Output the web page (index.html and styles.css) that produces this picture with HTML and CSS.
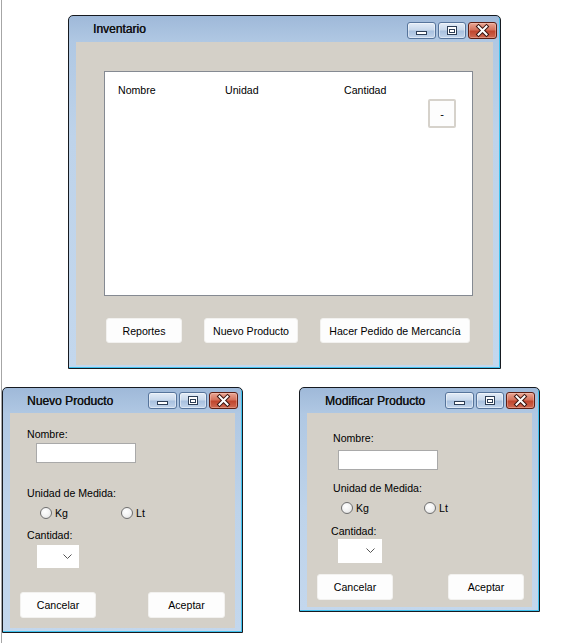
FILE: index.html
```html
<!DOCTYPE html>
<html lang="es">
<head>
<meta charset="utf-8">
<title>Inventario</title>
<link rel="stylesheet" href="styles.css">
</head>
<body>
<div class="desktop">

  <section class="window win-main">
    <header class="titlebar">
      <span class="title">Inventario</span>
      <div class="caption-btns">
        <span class="cbtn cbtn-min"><svg width="29" height="17" viewBox="0 0 29 17"><rect x="9.5" y="9.5" width="10" height="3" fill="#fff" stroke="#2d3e56"/></svg></span>
        <span class="cbtn cbtn-max"><svg width="28" height="17" viewBox="0 0 28 17"><rect x="9.5" y="4.5" width="9" height="8" fill="#fff" stroke="#2d3e56"/><rect x="11.5" y="7.5" width="5" height="3" fill="none" stroke="#2d3e56"/></svg></span>
        <span class="cbtn cbtn-close"><svg width="29" height="17" viewBox="0 0 29 17"><path d="M10.5 4.5 L18.5 12.5 M18.5 4.5 L10.5 12.5" stroke="#3a1510" stroke-width="4" stroke-linecap="square"/><path d="M10.5 4.5 L18.5 12.5 M18.5 4.5 L10.5 12.5" stroke="#fff" stroke-width="2" stroke-linecap="square"/></svg></span>
      </div>
    </header>
    <div class="client main-client">
      <div class="listbox">
        <div class="list-head">
          <span>Nombre</span>
          <span>Unidad</span>
          <span>Cantidad</span>
        </div>
        <div class="list-tools">
          <button class="btn-minus">-</button>
        </div>
      </div>
      <div class="main-actions">
        <button class="btn btn-rep">Reportes</button>
        <button class="btn btn-nuevo">Nuevo Producto</button>
        <button class="btn btn-pedido">Hacer Pedido de Mercancía</button>
      </div>
    </div>
  </section>

  <section class="window dialog win-nuevo">
    <header class="titlebar">
      <span class="title">Nuevo Producto</span>
      <div class="caption-btns">
        <span class="cbtn cbtn-min"><svg width="29" height="17" viewBox="0 0 29 17"><rect x="9.5" y="9.5" width="10" height="3" fill="#fff" stroke="#2d3e56"/></svg></span>
        <span class="cbtn cbtn-max"><svg width="28" height="17" viewBox="0 0 28 17"><rect x="9.5" y="4.5" width="9" height="8" fill="#fff" stroke="#2d3e56"/><rect x="11.5" y="7.5" width="5" height="3" fill="none" stroke="#2d3e56"/></svg></span>
        <span class="cbtn cbtn-close"><svg width="29" height="17" viewBox="0 0 29 17"><path d="M10.5 4.5 L18.5 12.5 M18.5 4.5 L10.5 12.5" stroke="#3a1510" stroke-width="4" stroke-linecap="square"/><path d="M10.5 4.5 L18.5 12.5 M18.5 4.5 L10.5 12.5" stroke="#fff" stroke-width="2" stroke-linecap="square"/></svg></span>
      </div>
    </header>
    <div class="client form">
      <label class="lbl lbl-nombre">Nombre:</label>
      <div class="input"></div>
      <label class="lbl lbl-unidad">Unidad de Medida:</label>
      <div class="radios">
        <span class="radio radio-kg"><span class="dot"></span>Kg</span>
        <span class="radio"><span class="dot"></span>Lt</span>
      </div>
      <label class="lbl lbl-cant">Cantidad:</label>
      <div class="combo"><svg width="9" height="6" viewBox="0 0 9 6"><path d="M0.5 0.5 L4.5 4.5 L8.5 0.5" fill="none" stroke="#555" stroke-width="1"/></svg></div>
      <div class="actions">
        <button class="btn btn-dlg">Cancelar</button>
        <button class="btn btn-dlg btn-ok">Aceptar</button>
      </div>
    </div>
  </section>

  <section class="window dialog win-mod">
    <header class="titlebar">
      <span class="title">Modificar Producto</span>
      <div class="caption-btns">
        <span class="cbtn cbtn-min"><svg width="29" height="17" viewBox="0 0 29 17"><rect x="9.5" y="9.5" width="10" height="3" fill="#fff" stroke="#2d3e56"/></svg></span>
        <span class="cbtn cbtn-max"><svg width="28" height="17" viewBox="0 0 28 17"><rect x="9.5" y="4.5" width="9" height="8" fill="#fff" stroke="#2d3e56"/><rect x="11.5" y="7.5" width="5" height="3" fill="none" stroke="#2d3e56"/></svg></span>
        <span class="cbtn cbtn-close"><svg width="29" height="17" viewBox="0 0 29 17"><path d="M10.5 4.5 L18.5 12.5 M18.5 4.5 L10.5 12.5" stroke="#3a1510" stroke-width="4" stroke-linecap="square"/><path d="M10.5 4.5 L18.5 12.5 M18.5 4.5 L10.5 12.5" stroke="#fff" stroke-width="2" stroke-linecap="square"/></svg></span>
      </div>
    </header>
    <div class="client form">
      <label class="lbl lbl-nombre">Nombre:</label>
      <div class="input"></div>
      <label class="lbl lbl-unidad">Unidad de Medida:</label>
      <div class="radios">
        <span class="radio radio-kg"><span class="dot"></span>Kg</span>
        <span class="radio"><span class="dot"></span>Lt</span>
      </div>
      <label class="lbl lbl-cant">Cantidad:</label>
      <div class="combo"><svg width="9" height="6" viewBox="0 0 9 6"><path d="M0.5 0.5 L4.5 4.5 L8.5 0.5" fill="none" stroke="#555" stroke-width="1"/></svg></div>
      <div class="actions">
        <button class="btn btn-dlg">Cancelar</button>
        <button class="btn btn-dlg btn-ok">Aceptar</button>
      </div>
    </div>
  </section>

</div>
</body>
</html>
```

FILE: styles.css
```css
html, body {
  margin: 0;
  padding: 0;
  background: #ffffff;
}

body {
  font-family: "Liberation Sans", Arial, sans-serif;
  font-size: 10.6px;
  color: #000;
}

.desktop {
  position: relative;
  width: 564px;
  height: 643px;
  margin-left: 1px;
  border-left: 1px solid #a6a6a6;
  box-sizing: border-box;
  overflow: hidden;
}

/* ---------- window chrome ---------- */
.window {
  position: absolute;
  box-sizing: border-box;
  display: flex;
  flex-direction: column;
  border: 1px solid #161a20;
  border-radius: 5px 5px 0 0;
  padding: 0 7px 3px 7px;
  background: linear-gradient(180deg, #9fb9d9 0px, #b0c8e3 26px, #bed3ea 120px, #c3d7ed 100%);
  box-shadow: inset -1px -1px 0 #3fc2ee;
}

.win-main {
  left: 66px;
  top: 15px;
  width: 433px;
  height: 354px;
}

.dialog {
  width: 241px;
  padding-bottom: 4px;
}

.win-nuevo {
  left: 0px;
  top: 387px;
  height: 246px;
}

.win-mod {
  left: 297px;
  top: 387px;
  height: 225px;
}

.titlebar {
  display: flex;
  align-items: flex-start;
  justify-content: space-between;
  height: 26px;
  flex: none;
}

.dialog .titlebar {
  height: 25px;
}

.title {
  font-size: 12px;
  line-height: 14px;
  color: #111;
  margin-top: 6px;
  margin-left: 17px;
  text-shadow: 0.35px 0 0 #111;
}

.win-mod .title {
  margin-left: 18px;
}

.caption-btns {
  display: flex;
  gap: 2px;
  margin-top: 6px;
  margin-right: -4px;
}

.dialog .caption-btns {
  margin-top: 4px;
  margin-right: -3px;
}

.cbtn {
  display: block;
  height: 17px;
  box-sizing: border-box;
  border: 1px solid #56749b;
  border-radius: 3px;
  background: linear-gradient(180deg, #e3ecf7 0%, #c9d9ec 45%, #a9c1df 55%, #c2d5ec 100%);
  box-shadow: inset 0 0 0 1px rgba(255, 255, 255, 0.45);
  overflow: hidden;
}

.cbtn svg {
  display: block;
  margin: -1px;
}

.cbtn-min { width: 29px; }
.cbtn-max { width: 28px; }

.cbtn-close {
  width: 29px;
  border-color: #5d1d12;
  background: linear-gradient(180deg, #eaa795 0%, #d5725c 45%, #c0462e 55%, #cf6a52 100%);
  box-shadow: inset 0 0 0 1px rgba(255, 220, 210, 0.35);
}

.client {
  flex: 1;
  background: #d4d0c8;
  display: flex;
  flex-direction: column;
  min-height: 0;
}

/* ---------- main window ---------- */
.main-client {
  padding: 29px 0 0 28px;
}

.listbox {
  width: 369px;
  height: 225px;
  box-sizing: border-box;
  background: #fff;
  border: 1px solid #858a92;
  padding: 11px 15px 0 13px;
}

.list-head {
  display: grid;
  grid-template-columns: 107px 119px auto;
  line-height: 14px;
}

.list-tools {
  display: flex;
  justify-content: flex-end;
  margin-top: 2px;
}

.btn-minus {
  width: 28px;
  height: 29px;
  box-sizing: border-box;
  border: 2px solid #d6d2cb;
  border-radius: 2px;
  background: #fdfdfd;
  font-family: inherit;
  font-size: 11px;
  color: #000;
  padding: 0;
  margin-right: 1px;
}

.main-actions {
  display: flex;
  gap: 22px;
  margin-top: 22px;
  margin-left: 2px;
}

.btn {
  height: 25px;
  box-sizing: border-box;
  border: 1px solid #f2f1ef;
  border-radius: 3px;
  background: #fdfdfd;
  font-family: inherit;
  font-size: 10.6px;
  color: #000;
  padding: 0;
}

.btn-rep { width: 76px; }
.btn-nuevo { width: 94px; }
.btn-pedido { width: 150px; }

/* ---------- dialogs ---------- */
.form {
  align-items: flex-start;
}

.lbl {
  display: block;
  line-height: 14px;
}

.input {
  width: 100px;
  height: 20px;
  box-sizing: border-box;
  background: #fff;
  border: 1px solid #a9a9a9;
}

.radios {
  display: flex;
  line-height: 14px;
}

.radio {
  display: flex;
  align-items: center;
  gap: 3px;
}

.dot {
  width: 12px;
  height: 12px;
  box-sizing: border-box;
  border-radius: 50%;
  border: 1px solid #6f6f6f;
  background: radial-gradient(circle at 40% 35%, #ffffff 0%, #f2f2f2 50%, #d9d9d9 100%);
}

.combo {
  box-sizing: border-box;
  background: #fff;
  display: flex;
  align-items: center;
  justify-content: flex-end;
}

.combo svg {
  display: block;
  margin-right: 7px;
}

.actions {
  display: flex;
  justify-content: space-between;
  align-self: stretch;
  padding-left: 10px;
}

.btn-dlg {
  width: 76px;
  height: 26px;
}

/* Nuevo Producto layout */
.win-nuevo .lbl-nombre { margin: 14px 0 0 17px; }
.win-nuevo .input { margin: 2px 0 0 26px; }
.win-nuevo .lbl-unidad { margin: 23px 0 0 17px; }
.win-nuevo .radios { margin: 6px 0 0 30px; }
.win-nuevo .radio-kg { width: 81px; }
.win-nuevo .lbl-cant { margin: 8px 0 0 17px; }
.win-nuevo .combo { margin: 3px 0 0 27px; width: 42px; height: 23px; }
.win-nuevo .actions { margin-top: 24px; padding-right: 10px; }
.win-nuevo .btn-ok { width: 77px; }

/* Modificar Producto layout */
.win-mod .lbl-nombre { margin: 18px 0 0 26px; }
.win-mod .input { margin: 5px 0 0 31px; }
.win-mod .lbl-unidad { margin: 11px 0 0 26px; }
.win-mod .radios { margin: 6px 0 0 34px; }
.win-mod .radio-kg { width: 83px; }
.win-mod .lbl-cant { margin: 9px 0 0 24px; }
.win-mod .combo { margin: 1px 0 0 31px; width: 44px; height: 24px; }
.win-mod .actions { margin-top: 11px; padding-right: 8px; }
```
